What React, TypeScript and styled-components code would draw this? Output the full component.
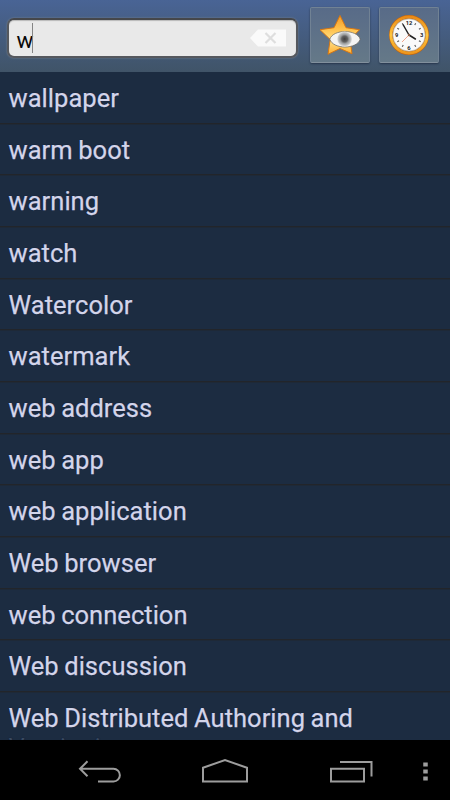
import React, { useState } from "react";
import styled, { createGlobalStyle } from "styled-components";

const GlobalStyle = createGlobalStyle`
  * { box-sizing: border-box; }
  body { margin: 0; background: #000; font-family: Roboto, "Noto Sans", sans-serif; }
`;

const Screen = styled.div`
  width: 450px;
  height: 800px;
  display: flex;
  flex-direction: column;
  overflow: hidden;
  background: #1c2c41;
`;

const Toolbar = styled.header`
  height: 72px;
  flex: none;
  display: flex;
  align-items: flex-start;
  padding: 7px 0 0 7px;
  background: linear-gradient(#496495, #405468);
`;

const SearchBox = styled.div`
  width: 291px;
  height: 40px;
  flex: none;
  margin-top: 11px;
  margin-right: 12px;
  display: flex;
  align-items: center;
  padding: 0 10px 0 7.5px;
  border: 2px solid #55585e;
  border-top-color: #45474b;
  border-radius: 7px;
  background: #e9e9e9;
  box-shadow: 0 0 2px #7b8591, inset 0 1px 1px #b9b9b9;
`;

const Query = styled.span`
  font-size: 22.5px;
  line-height: 32px;
  letter-spacing: -1.2px;
  color: #080808;
  padding-top: 4px;
`;

const Caret = styled.span`
  width: 1px;
  height: 30px;
  margin-right: auto;
  background: #858585;
`;

const ClearButton = styled.button`
  display: flex;
  padding: 0;
  border: 0;
  background: none;
`;

const ToolButton = styled.button`
  width: 60px;
  height: 56px;
  flex: none;
  display: flex;
  align-items: center;
  justify-content: center;
  padding: 0;
  margin-right: 9px;
  border: 1px solid #718294;
  border-bottom-color: #82909d;
  border-radius: 2px;
  background: linear-gradient(#586b88, #657988);
  box-shadow: 0 1px 2px #26364c;
`;

const WordList = styled.ul`
  height: 668px;
  flex: none;
  margin: 0;
  padding: 0;
  list-style: none;
  overflow: hidden;
`;

const Word = styled.li`
  height: 51.66px;
  padding: 11px 9px 0 8.5px;
  border-bottom: 1px solid #22252a;
  box-shadow: 0 1px 0 #1e2937;
  font-size: 25.5px;
  line-height: 30px;
  word-spacing: -0.8px;
  letter-spacing: 0.03px;
  color: #d3d5ea;
  -webkit-text-stroke: 0.25px #d3d5ea;
  text-shadow: 0 0 1px #0a1233;
`;

const FadedLine = styled.span`
  display: block;
  color: #3a4a60;
  -webkit-text-stroke: 0;
`;

const NavBar = styled.nav`
  height: 60px;
  flex: none;
  display: flex;
  background: #000;
`;

const words = [
  "wallpaper", "warm boot", "warning", "watch", "Watercolor", "watermark",
  "web address", "web app", "web application", "Web browser", "web connection",
  "Web discussion",
];

const ClearIcon = () => (
  <svg width="36" height="18" viewBox="0 0 36 18">
    <path d="M0 9 8 .5H36v17H8Z" fill="#fafafa" />
    <path d="m15.5 4 10 10m0-10-10 10" stroke="#dedede" strokeWidth="2.2" />
  </svg>
);

const StarEyeIcon = () => (
  <svg width="42" height="42" viewBox="0 0 42 42">
    <defs>
      <linearGradient id="gold" x2="0" y2="1">
        <stop stopColor="#f29a26" /><stop offset=".35" stopColor="#ffc14c" />
        <stop offset=".65" stopColor="#ffe08a" /><stop offset="1" stopColor="#ffad2d" />
      </linearGradient>
      <radialGradient id="iris">
        <stop stopColor="#404040" /><stop offset=".4" stopColor="#626262" />
        <stop offset=".6" stopColor="#9a9c9d" /><stop offset=".85" stopColor="#c1c3c4" />
        <stop offset="1" stopColor="#e1e1e1" />
      </radialGradient>
    </defs>
    <path d="m21 1.5 6 12.2 13.5 2L31 25.5l2 14.3-12-5.3-12 5.8 2.2-14.8L1 15.7l14-2Z" fill="url(#gold)" stroke="#d77713" strokeWidth="1" strokeLinejoin="round" />
    <path d="M10.8 25.2C14 15 38 15 41.2 25.2c-3.2 10.4-27.2 10.4-30.4 0Z" fill="#f4f4f4" stroke="#66635b" strokeWidth=".7" />
    <circle cx="25.6" cy="25" r="7.4" fill="url(#iris)" />
  </svg>
);

const ClockIcon = () => (
  <svg width="42" height="42" viewBox="0 0 42 42">
    <defs>
      <linearGradient id="rim" x2="0" y2="1">
        <stop stopColor="#e98a16" /><stop offset=".5" stopColor="#ffc63e" /><stop offset="1" stopColor="#ed961c" />
      </linearGradient>
    </defs>
    <circle cx="21" cy="21" r="18.1" fill="#fafafa" stroke="#bf6410" strokeWidth="3.8" />
    <circle cx="21" cy="21" r="18.1" fill="none" stroke="url(#rim)" strokeWidth="2.8" />
    <circle cx="21" cy="21" r="16.2" fill="none" stroke="#b4a992" strokeWidth=".7" />
    {[30, 60, 120, 150, 210, 240, 300, 330].map((angle) => (
      <path key={angle} d="M21 7.5v2" stroke="#555" strokeWidth="1.1" transform={`rotate(${angle} 21 21)`} />
    ))}
    <g fill="#222" fontFamily="Roboto, sans-serif" fontSize="5.8" fontWeight="700" textAnchor="middle">
      <text x="21" y="10.7">12</text><text x="33.6" y="23">3</text>
      <text x="21" y="36">6</text><text x="8.6" y="23">9</text>
    </g>
    <path d="M21 21 14 28" stroke="#f2a58c" strokeWidth="1" />
    <path d="m21 21-5.7-10M21 21l6.4 4" stroke="#222" strokeWidth="1.5" strokeLinecap="round" />
    <circle cx="21" cy="21" r="1.2" fill="#8c6048" />
  </svg>
);

const NavIcons = () => (
  <svg width="450" height="60" viewBox="0 0 450 60" fill="none" stroke="#9d9d9d" strokeWidth="2">
    <path d="M98 41.5h15.5a6.1 6.1 0 0 0 0-12.7H80m7.5-7.5-7.5 7.5 7.5 7.5" />
    <path d="M203 27.8 225 20l22 7.8v13.7h-44Z" />
    <path d="M331 28.8h33v12.7h-33ZM340 22h31.5v14.5" />
    <path d="M425.5 22.5v4m0 3v4m0 3v4" strokeWidth="4.5" />
  </svg>
);

export default function App() {
  const [query, setQuery] = useState("w");
  return (
    <>
      <GlobalStyle />
      <Screen>
        <Toolbar>
          <SearchBox>
            <Query>{query}</Query>
            <Caret />
            <ClearButton aria-label="Clear" onClick={() => setQuery("")}><ClearIcon /></ClearButton>
          </SearchBox>
          <ToolButton aria-label="Favorites"><StarEyeIcon /></ToolButton>
          <ToolButton aria-label="History"><ClockIcon /></ToolButton>
        </Toolbar>
        <WordList>
          {words.map((word) => <Word key={word}>{word}</Word>)}
          <Word>Web Distributed Authoring and<FadedLine>Versioning</FadedLine></Word>
        </WordList>
        <NavBar><NavIcons /></NavBar>
      </Screen>
    </>
  );
}
